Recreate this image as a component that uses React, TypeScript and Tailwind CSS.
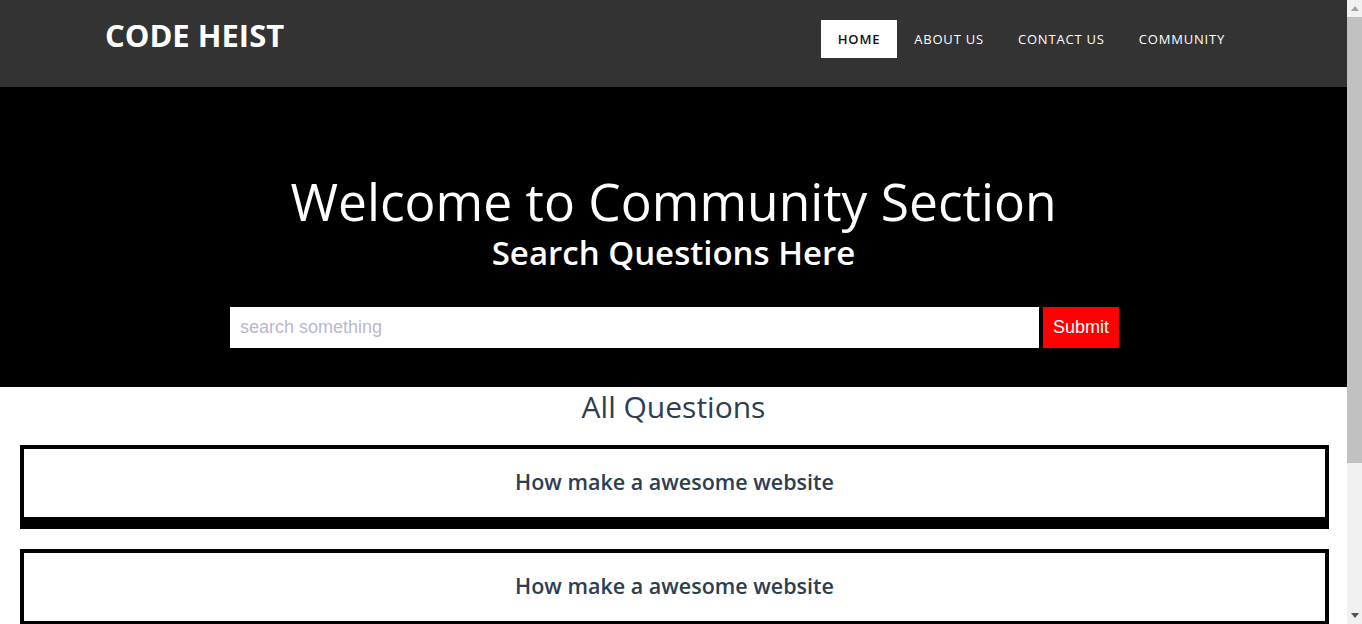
import React from "react";

const questions = [
  "How make a awesome website",
  "How make a awesome website",
  "How make a awesome website",
  "How make a awesome website",
];

function FakeScrollbar() {
  return (
    <div className="w-[15px] h-screen bg-[#f1f1f1] flex flex-col items-center shrink-0">
      <div className="h-[17px] w-full flex items-center justify-center">
        <svg width="8" height="5" viewBox="0 0 8 5">
          <path d="M0 5 L4 0 L8 5 Z" fill="#a3a3a3" />
        </svg>
      </div>
      <div className="w-full h-[446px] bg-[#c1c1c1]" />
      <div className="flex-1" />
      <div className="h-[17px] w-full flex items-center justify-center">
        <svg width="8" height="5" viewBox="0 0 8 5">
          <path d="M0 0 L8 0 L4 5 Z" fill="#505050" />
        </svg>
      </div>
    </div>
  );
}

export default function App() {
  return (
    <div className="h-screen overflow-hidden flex bg-white" style={{ fontFamily: '"Open Sans", "Liberation Sans", sans-serif' }}>
      <div className="w-[1347px] shrink-0">
        <header className="h-[87px] bg-[#333333] flex items-start justify-between pl-[105px] pr-[105px]">
          <div className="pt-[16px] text-white font-bold text-[31px] leading-[38px] tracking-[0px]">
            CODE HEIST
          </div>
          <nav className="flex pt-[20px]">
            {["HOME", "ABOUT US", "CONTACT US", "COMMUNITY"].map((item, i) => (
              <a
                key={item}
                className={
                  "h-[38px] flex items-center px-[17px] pt-[2px] text-[13px] tracking-[0.8px] " +
                  (i === 0 ? "bg-white text-[#111111] font-semibold" : "text-white")
                }
              >
                {item}
              </a>
            ))}
          </nav>
        </header>

        <section className="h-[300px] bg-black flex flex-col items-center pt-[86px]">
          <h1 className="text-white text-[51.5px] leading-[56px] font-normal">Welcome to Community Section</h1>
          <h2 className="text-white text-[33px] leading-[40px] font-semibold mt-[4px]">Search Questions Here</h2>
          <div className="flex mt-[34px] gap-[4px] pl-[2px]">
            <input
              className="w-[809px] h-[41px] bg-white px-[10px] text-[18px] outline-none placeholder:text-[#b8b8cf]"
              style={{ fontFamily: '"Liberation Sans", Arial, sans-serif' }}
              placeholder="search something"
            />
            <button
              className="w-[76px] h-[41px] bg-[#ff0000] text-white text-[18px]"
              style={{ fontFamily: '"Liberation Sans", Arial, sans-serif' }}
            >
              Submit
            </button>
          </div>
        </section>

        <h3 className="text-center text-[#2c3e50] text-[30px] leading-[40px] font-medium">All Questions</h3>

        <div className="flex flex-col gap-[20px] mt-[18px] ml-[20px] mr-[18px] pb-[20px]">
          {questions.map((q, i) => (
            <div
              key={i}
              className="border-[4px] border-b-[12px] border-black h-[84px] flex items-start justify-center pt-[18px]"
            >
              <span className="text-[#2c3e50] text-[21.5px] leading-[30px] font-semibold">{q}</span>
            </div>
          ))}
        </div>
      </div>
      <FakeScrollbar />
    </div>
  );
}
